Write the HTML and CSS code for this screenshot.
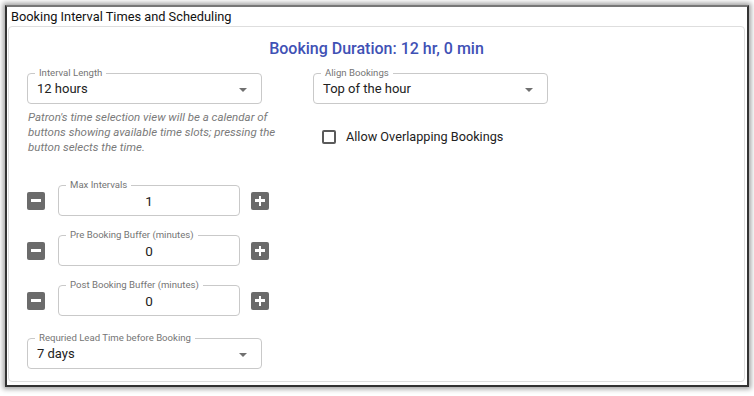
FILE: index.html
```html
<!DOCTYPE html>
<html>
<head>
<meta charset="utf-8">
<link rel="stylesheet" href="styles.css">
</head>
<body>
<div class="frame">
  <div class="frame-title">Booking Interval Times and Scheduling</div>
  <div class="card">
    <div class="duration">Booking Duration: 12 hr, 0 min</div>
    <div class="grid">
      <div class="col-left">
        <div class="field select">
          <span class="label">Interval Length</span>
          <span class="value">12 hours</span>
          <span class="arrow"></span>
        </div>
        <p class="help">Patron's time selection view will be a calendar of buttons showing available time slots; pressing the button selects the time.</p>
        <div class="numbers">
          <div class="num-row">
            <span class="btn minus"></span>
            <div class="field number"><span class="label">Max Intervals</span><span class="value">1</span></div>
            <span class="btn plus"></span>
          </div>
          <div class="num-row">
            <span class="btn minus"></span>
            <div class="field number"><span class="label">Pre Booking Buffer (minutes)</span><span class="value">0</span></div>
            <span class="btn plus"></span>
          </div>
          <div class="num-row">
            <span class="btn minus"></span>
            <div class="field number"><span class="label">Post Booking Buffer (minutes)</span><span class="value">0</span></div>
            <span class="btn plus"></span>
          </div>
        </div>
        <div class="field select lead">
          <span class="label">Requried Lead Time before Booking</span>
          <span class="value">7 days</span>
          <span class="arrow"></span>
        </div>
      </div>
      <div class="col-right">
        <div class="field select">
          <span class="label">Align Bookings</span>
          <span class="value">Top of the hour</span>
          <span class="arrow"></span>
        </div>
        <label class="check">
          <span class="box"></span>
          <span class="check-text">Allow Overlapping Bookings</span>
        </label>
      </div>
    </div>
  </div>
</div>
</body>
</html>
```

FILE: styles.css
```css
* { box-sizing: border-box; }
html, body { margin: 0; padding: 0; }
body {
  background: #ffffff;
  font-family: Roboto, "Liberation Sans", sans-serif;
  color: #222;
  width: 754px;
  height: 396px;
  overflow: hidden;
}
.frame {
  margin: 5px 0 0 5px;
  width: 744px;
  height: 382px;
  border: 2px solid #333;
  border-top-color: #777;
  background: #fff;
  box-shadow: 0 0 5px 2px rgba(0,0,0,0.38);
  display: flex;
  flex-direction: column;
}
.frame-title {
  height: 19px;
  line-height: 20px;
  padding-left: 4px;
  font-size: 12.8px;
  color: #111;
}
.card {
  flex: 1;
  margin: 0 2px 3px 1px;
  border: 1px solid #dedede;
  border-radius: 4px;
  padding: 12px 18px 0 18px;
}
.duration {
  text-align: center;
  font-size: 16px;
  line-height: 20px;
  font-weight: 500;
  color: #3f51b5;
  margin-right: -18px;
  margin-left: -18px;
}
.grid {
  display: grid;
  grid-template-columns: 286px 235px;
  margin-top: 14px;
}
.field {
  position: relative;
  border: 1px solid #c9c9c9;
  border-radius: 4px;
  height: 31px;
  display: flex;
  align-items: center;
}
.field .label {
  position: absolute;
  top: -7px;
  left: 7px;
  padding: 0 4px;
  background: #fff;
  font-size: 9.6px;
  line-height: 12px;
  color: #757575;
  white-space: nowrap;
}
.select { width: 235px; padding-left: 9px; }
.select .value { font-size: 13px; color: #222; }
.arrow {
  position: absolute;
  right: 14px;
  top: 14px;
  width: 0;
  height: 0;
  border-left: 4.5px solid transparent;
  border-right: 4.5px solid transparent;
  border-top: 4.5px solid #707070;
}
.help {
  margin: 6px 0 0 1px;
  width: 262px;
  font-size: 11.5px;
  line-height: 15px;
  font-style: italic;
  color: #7a7a7a;
}
.numbers {
  margin-top: 30px;
  display: flex;
  flex-direction: column;
  gap: 19px;
}
.num-row {
  display: flex;
  align-items: center;
}
.number {
  width: 182px;
  margin: 0 11px 0 13px;
  justify-content: center;
}
.number .value { font-size: 13.5px; color: #222; }
.btn {
  position: relative;
  width: 18px;
  height: 18px;
  border-radius: 2px;
  background: #6b6b6b;
  display: flex;
  align-items: center;
  justify-content: center;
}
.btn::before {
  content: "";
  width: 10px;
  height: 2.5px;
  background: #fff;
}
.plus::after {
  content: "";
  position: absolute;
  width: 2.5px;
  height: 10px;
  background: #fff;
}
.lead { margin-top: 22px; }
.check {
  display: flex;
  align-items: center;
  margin: 25px 0 0 9px;
}
.box {
  width: 14px;
  height: 14px;
  border: 2px solid #5a5a5a;
  border-radius: 2px;
}
.check-text {
  margin-left: 10px;
  font-size: 12.7px;
  color: #222;
}
```
